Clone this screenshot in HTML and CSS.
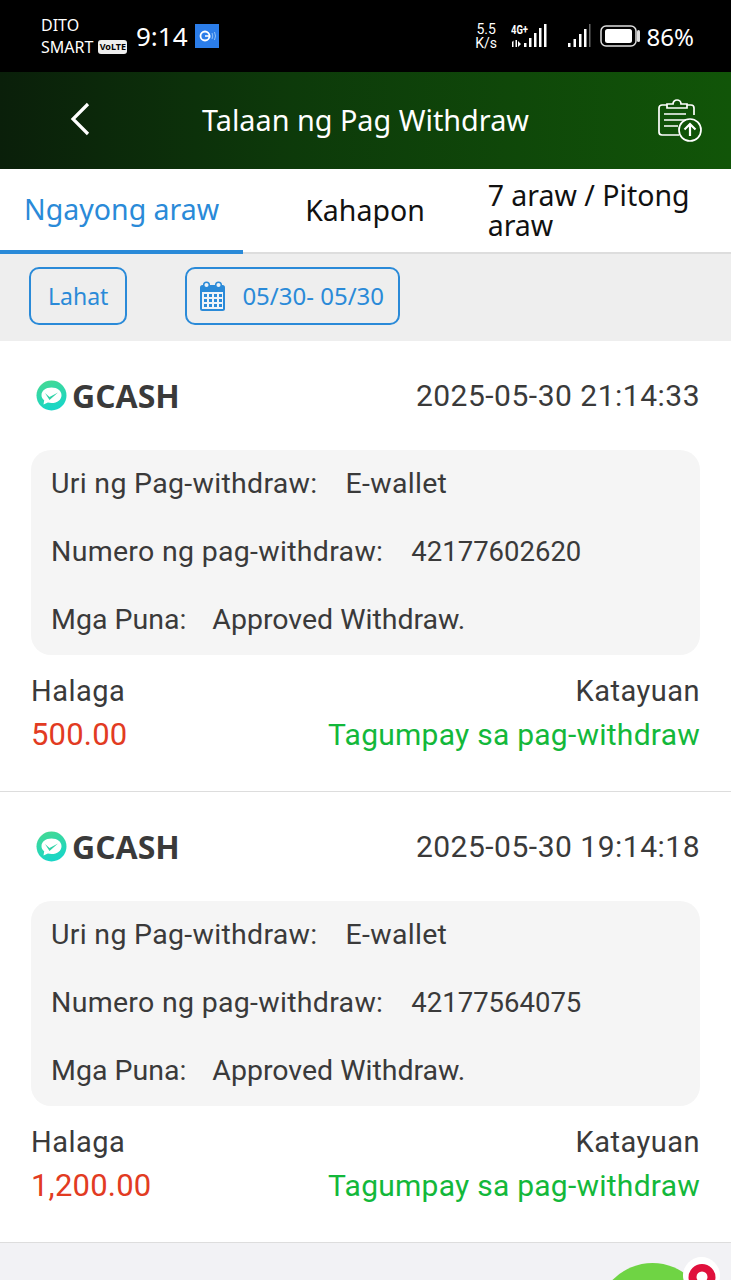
FILE: index.html
```html
<!DOCTYPE html>
<html lang="en">
<head>
    <meta charset="UTF-8">
    <meta name="viewport" content="width=device-width, initial-scale=1.0">
    <title>Talaan ng Pag Withdraw</title>
    <link rel="stylesheet" href="styles.css">
</head>
<body>
<div class="page">
    <div class="statusbar">
        <div class="carrier">
            <span>DITO</span>
            <span class="carrier-2">SMART <b class="volte">VoLTE</b></span>
        </div>
        <div class="clock">9:14</div>
        <div class="gbadge">
            <svg width="24" height="24" viewBox="0 0 24 24"><circle cx="10" cy="12" r="4.500" fill="none" stroke="#fff" stroke-width="1.800"/><path d="M10 12h4.500v2" fill="none" stroke="#fff" stroke-width="1.500"/><path d="M17 9q1.500 3 0 6M19.500 8q2 4 0 8" fill="none" stroke="#8fc0f5" stroke-width="1"/></svg>
        </div>
        <div class="status-right">
            <div class="speed"><span>5.5</span><span>K/s</span></div>
            <svg width="37" height="26" viewBox="0 0 37 26">
                <text x="0" y="11" class="tiny" textLength="17" lengthAdjust="spacingAndGlyphs">4G+</text>
                <path d="M1 19l1.500-1.500V24H1zM4.500 17h1.500v7H4.500zM7 18l3 3-3 3zM13 20h2.500v4H13zM18 15h2.500v9H18zM23 10h2.500v14H23zM28 5h2.500v19H28zM33 1h2.500v23H33z" fill="#fff"/>
            </svg>
            <svg width="24" height="26" viewBox="0 0 24 26">
                <path d="M1 20h2.500v4H1zM6.500 16h2.500v8H6.500zM12 11h2.500v13H12zM17 6h2.500v18H17z" fill="#fff"/>
                <path d="M22 1h1.500v23H22z" fill="#666"/>
            </svg>
            <svg width="40" height="24" viewBox="0 0 40 24">
                <rect x="1" y="2" width="35" height="20" rx="5" fill="none" stroke="#ddd" stroke-width="1.500"/>
                <rect x="5" y="5" width="27" height="14" rx="2.500" fill="#fff"/>
                <rect x="37" y="6" width="3" height="12" rx="1.500" fill="#ddd"/>
            </svg>
            <span class="pct">86%</span>
        </div>
    </div>

    <header class="topbar">
        <svg class="back" width="24" height="36" viewBox="0 0 24 36"><path d="M20 3L5 18l15 15" fill="none" stroke="#fff" stroke-width="3.200"/></svg>
        <h1>Talaan ng Pag Withdraw</h1>
        <svg width="46" height="44" viewBox="0 0 46 44">
            <path d="M10 6H5a3 3 0 0 0-3 3v24a3 3 0 0 0 3 3h17M30 6h4a3 3 0 0 1 3 3v7" fill="none" stroke="#fff" stroke-width="1.700"/>
            <path d="M10 9V5h6a4 4 0 0 1 8 0h6v4z" fill="none" stroke="#fff" stroke-width="1.700"/>
            <path d="M7 15h22M7 21h22M7 27h14" stroke="#fff" stroke-width="1.700"/>
            <circle cx="33" cy="31" r="11" fill="none" stroke="#fff" stroke-width="1.700"/>
            <path d="M33 37V25.500M27.500 30.500L33 25l5.500 5.500" fill="none" stroke="#fff" stroke-width="2.200"/>
        </svg>
    </header>

    <nav class="tabs">
        <div class="tab active">Ngayong araw</div>
        <div class="tab">Kahapon</div>
        <div class="tab multi">7 araw / Pitong araw</div>
    </nav>

    <div class="filters">
        <div class="chip">Lahat</div>
        <div class="chip date">
            <svg width="27" height="30" viewBox="0 0 27 30">
                <rect x="1" y="4" width="25" height="26" rx="2.500" fill="#2a8ad8"/>
                <rect x="3" y="11" width="21" height="17" fill="#eef3f8"/>
                <path d="M5 13h3v3H5zM10 13h3v3h-3zM15 13h3v3h-3zM20 13h3v3h-3zM5 18h3v3H5zM10 18h3v3h-3zM15 18h3v3h-3zM20 18h3v3h-3zM5 23h3v3H5zM10 23h3v3h-3zM15 23h3v3h-3zM20 23h3v3h-3z" fill="#2a8ad8"/>
                <circle cx="7.500" cy="4" r="2.800" fill="#eef3f8" stroke="#2a8ad8" stroke-width="1.500"/>
                <circle cx="19.500" cy="4" r="2.800" fill="#eef3f8" stroke="#2a8ad8" stroke-width="1.500"/>
            </svg>
            <span>05/30- 05/30</span>
        </div>
    </div>

    <section class="record">
        <div class="rec-head">
            <div class="brand">
                <svg width="31" height="31" viewBox="0 0 31 31">
                    <defs><linearGradient id="gc" x1="0" y1="0" x2="0.300" y2="1"><stop offset="0" stop-color="#48d98f"/><stop offset="1" stop-color="#19d6c6"/></linearGradient></defs>
                    <circle cx="15.500" cy="15.500" r="15" fill="url(#gc)"/>
                    <path d="M15.500 7.500c6 0 10 3.300 10 7.700s-4 7.800-10 7.800c-1.300 0-2.500-.2-3.600-.5L7.500 24.500l.7-4.300c-1.700-1.400-2.700-3.100-2.700-5C5.500 10.800 9.500 7.500 15.500 7.500z" fill="#fff"/>
                    <path d="M9 13l4.500 4 8.500-4.500-8.500 7.500z" fill="#2fd3a8"/>
                </svg>
                <span>GCASH</span>
            </div>
            <div class="stamp">2025-05-30 21:14:33</div>
        </div>
        <div class="details">
            <div class="line"><span>Uri ng Pag-withdraw:</span><span>E-wallet</span></div>
            <div class="line"><span>Numero ng pag-withdraw:</span><span class="num">42177602620</span></div>
            <div class="line plain"><span>Mga Puna:</span><span>Approved Withdraw.</span></div>
        </div>
        <div class="rec-foot">
            <div class="col"><span>Halaga</span><span class="amount">500.00</span></div>
            <div class="col right"><span>Katayuan</span><span class="ok">Tagumpay sa pag-withdraw</span></div>
        </div>
    </section>

    <section class="record">
        <div class="rec-head">
            <div class="brand">
                <svg width="31" height="31" viewBox="0 0 31 31">
                    <circle cx="15.500" cy="15.500" r="15" fill="url(#gc)"/>
                    <path d="M15.500 7.500c6 0 10 3.300 10 7.700s-4 7.800-10 7.800c-1.300 0-2.500-.2-3.600-.5L7.500 24.500l.7-4.300c-1.700-1.400-2.700-3.100-2.700-5C5.500 10.800 9.500 7.500 15.500 7.500z" fill="#fff"/>
                    <path d="M9 13l4.500 4 8.500-4.500-8.500 7.500z" fill="#2fd3a8"/>
                </svg>
                <span>GCASH</span>
            </div>
            <div class="stamp">2025-05-30 19:14:18</div>
        </div>
        <div class="details">
            <div class="line"><span>Uri ng Pag-withdraw:</span><span>E-wallet</span></div>
            <div class="line"><span>Numero ng pag-withdraw:</span><span class="num">42177564075</span></div>
            <div class="line plain"><span>Mga Puna:</span><span>Approved Withdraw.</span></div>
        </div>
        <div class="rec-foot">
            <div class="col"><span>Halaga</span><span class="amount">1,200.00</span></div>
            <div class="col right"><span>Katayuan</span><span class="ok">Tagumpay sa pag-withdraw</span></div>
        </div>
    </section>

    <div class="float-btn"></div>
    <div class="pin"><svg width="28" height="34" viewBox="0 0 28 34"><path d="M14 1a13.500 13.500 0 0 1 13.500 13.500C27.500 23 14 34 14 34S.5 23 .5 14.500A13.500 13.500 0 0 1 14 1z" fill="#e0103c"/><circle cx="14" cy="14" r="5.500" fill="#fff"/></svg></div>
</div>
</body>
</html>
```
FILE: styles.css
```css
* {
    box-sizing: border-box;
}
body {
    margin: 0;
    font-family: Roboto, "Noto Sans", sans-serif;
    color: #3a3a3a;
}
.page {
    position: relative;
    height: 1280px;
    overflow: hidden;
    background: #f2f2f5;
}
.statusbar {
    height: 72px;
    background: #000;
    color: #fff;
    display: flex;
    align-items: center;
    padding: 0 37px 0 41px;
}
.carrier {
    display: flex;
    flex-direction: column;
    font-family: "Noto Sans", sans-serif;
    font-size: 16px;
    line-height: 22px;
    width: 95px;
    margin-top: -1px;
}
.carrier-2 {
    display: flex;
    align-items: center;
    gap: 5px;
    white-space: nowrap;
}
.volte {
    flex: none;
    width: 29px;
    height: 14px;
    background: #eee;
    color: #000;
    font-size: 9px;
    line-height: 14px;
    text-align: center;
    border-radius: 3px;
}
.clock {
    width: 52px;
    font-family: "Noto Sans", sans-serif;
    font-size: 26px;
}
.gbadge {
    width: 24px;
    height: 24px;
    margin-left: 7px;
    background: #2b7de9;
}
.status-right {
    margin-left: auto;
    display: flex;
    align-items: center;
}
.speed {
    display: flex;
    flex-direction: column;
    width: 23px;
    margin-right: 13px;
    font-size: 14px;
    line-height: 14px;
    text-align: center;
}
.status-right svg:nth-of-type(1) {
    margin-right: 19px;
}
.status-right svg:nth-of-type(2) {
    margin-right: 9px;
}
.status-right svg:nth-of-type(3) {
    margin-right: 7px;
}
.tiny {
    font-size: 12px;
    font-weight: 700;
    fill: #fff;
}
.pct {
    font-family: "Noto Sans", sans-serif;
    font-size: 24px;
}
.topbar {
    height: 97px;
    display: flex;
    align-items: center;
    padding: 0 28px 0 68px;
    background: linear-gradient(90deg, #0a1f0a 0%, #0d3a0a 40%, #115508 100%);
    color: #fff;
}
.topbar .back {
    margin-bottom: 3px;
}
.topbar h1 {
    flex: 1;
    margin: 0;
    padding: 0 18px 2px 0;
    text-align: center;
    font-family: "Noto Sans", sans-serif;
    font-size: 28.800px;
    line-height: 34px;
    font-weight: 400;
}
.tabs {
    height: 85px;
    background: #fff;
    display: flex;
    border-bottom: 2px solid #ddd;
    font-family: "Noto Sans", sans-serif;
}
.tab {
    flex: 1;
    display: flex;
    align-items: center;
    justify-content: center;
    font-size: 28.500px;
    line-height: 30px;
    padding-bottom: 2px;
    color: #111;
}
.tab.active {
    color: #2a8ad8;
    border-bottom: 4px solid #2a8ad8;
    margin-bottom: -2px;
}
.tab.multi {
    justify-content: flex-start;
    padding-left: 1px;
}
.filters {
    height: 87px;
    display: flex;
    align-items: center;
    gap: 58px;
    padding: 0 0 4px 29px;
    background: #eee;
}
.chip {
    height: 58px;
    display: flex;
    align-items: center;
    padding: 0 17px;
    border: 2px solid #2a8ad8;
    border-radius: 10px;
    color: #2a8ad8;
    font-family: "Noto Sans", sans-serif;
    font-size: 23px;
}
.chip.date {
    gap: 16px;
    padding: 0 14px 0 12px;
    font-size: 24px;
}
.record {
    height: 451px;
    background: #fff;
    border-bottom: 1px solid #ddd;
    padding: 0 31px;
}
.rec-head {
    height: 109px;
    display: flex;
    justify-content: space-between;
    align-items: center;
}
.brand {
    display: flex;
    align-items: center;
    gap: 5px;
    padding-left: 5px;
    font-family: "Open Sans", sans-serif;
    font-size: 32px;
    font-weight: 700;
}
.stamp {
    font-size: 30px;
    letter-spacing: 0.5px;
}
.details {
    height: 205px;
    padding: 0 20px 2px;
    background: #f5f5f5;
    border-radius: 20px;
    display: flex;
    flex-direction: column;
    justify-content: space-around;
    font-size: 28.500px;
}
.line {
    display: flex;
    gap: 28px;
    letter-spacing: 0.3px;
}
.line.plain {
    gap: 26px;
    letter-spacing: 0;
}
.num {
    font-size: 27.500px;
    letter-spacing: 0;
}
.rec-foot {
    display: flex;
    justify-content: space-between;
    padding-top: 19px;
    font-size: 29px;
    line-height: 34px;
    letter-spacing: 0.5px;
}
.col {
    display: flex;
    flex-direction: column;
    gap: 10px;
}
.col.right {
    text-align: right;
}
.amount {
    color: #e23b22;
    font-size: 31px;
    letter-spacing: 0.2px;
}
.ok {
    color: #13b83a;
    font-size: 30px;
    letter-spacing: 0.25px;
}
.float-btn {
    position: absolute;
    left: 597px;
    top: 1263px;
    width: 111px;
    height: 111px;
    border-radius: 50%;
    background: #6fd444;
}
.pin {
    position: absolute;
    left: 683px;
    top: 1257px;
    width: 37px;
    height: 37px;
    border-radius: 50%;
    background: #fff;
    display: flex;
    justify-content: center;
    padding-top: 6px;
}
```
